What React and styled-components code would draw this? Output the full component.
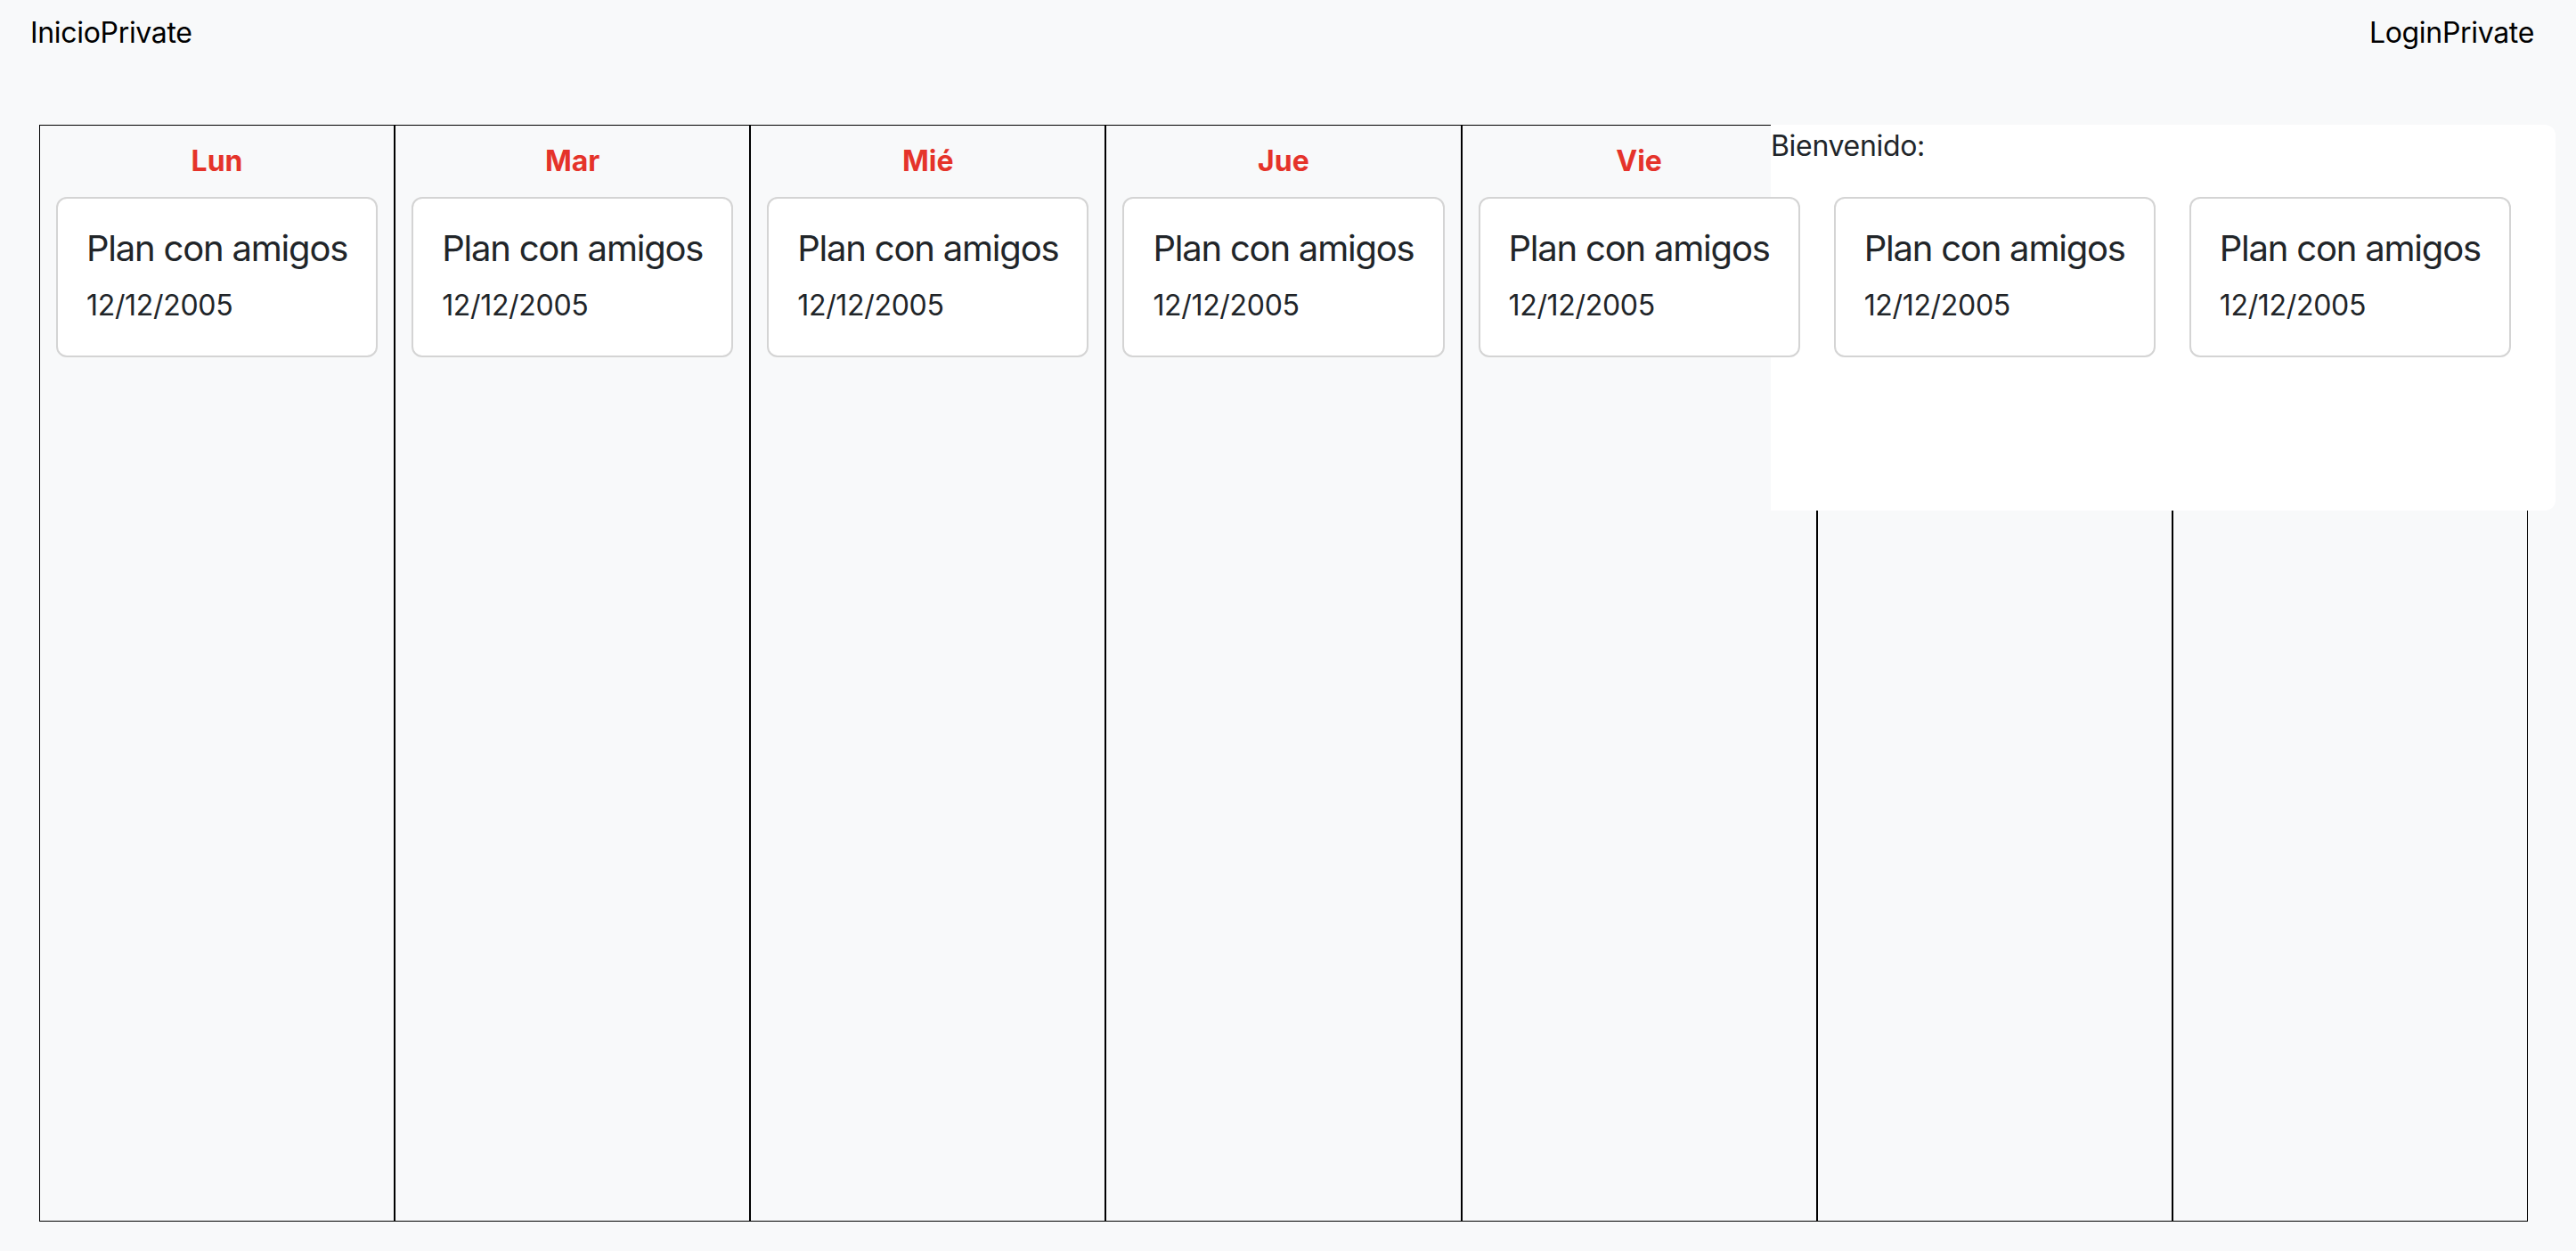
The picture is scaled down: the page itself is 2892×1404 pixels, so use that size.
import styled, { createGlobalStyle } from "styled-components";

const GlobalStyle = createGlobalStyle`
  body {
    margin: 0;
    background: #f8f9fa;
    font-family: Inter, "Liberation Sans", sans-serif;
    letter-spacing: -0.02em;
    color: #212529;
  }
`;

const days = ["Lun", "Mar", "Mié", "Jue", "Vie", "Sáb", "Dom"];

export default function App() {
  return (
    <>
      <GlobalStyle />
      <Nav>
        <NavLink>InicioPrivate</NavLink>
        <NavLink>LoginPrivate</NavLink>
      </Nav>
      <Board>
        <Week>
          {days.map((day) => (
            <Column key={day}>
              <DayName>{day}</DayName>
              <Card>
                <Title>Plan con amigos</Title>
                <Date>12/12/2005</Date>
              </Card>
            </Column>
          ))}
        </Week>
        <Welcome>Bienvenido:</Welcome>
      </Board>
    </>
  );
}

const Nav = styled.nav`
  display: flex;
  justify-content: space-between;
  padding: 13px 47px 0 34px;
`;

const NavLink = styled.span`
  font-size: 32px;
  line-height: 48px;
  color: #000;
`;

const Board = styled.main`
  position: relative;
  margin: 79px 0 0 44px;
  width: 2793px;
`;

const Week = styled.div`
  display: grid;
  grid-template-columns: repeat(7, 1fr);
  height: 1231px;
`;

const Column = styled.section`
  display: flex;
  flex-direction: column;
  border: 1px solid #000;
  padding: 0 18px;
`;

const DayName = styled.h4`
  margin: 16px 0 16px;
  text-align: center;
  font-size: 32px;
  line-height: 48px;
  font-weight: 700;
  letter-spacing: 0;
  color: #e5332a;
`;

const Card = styled.div`
  position: relative;
  z-index: 2;
  background: #fff;
  border: 2px solid #d4d4d4;
  border-radius: 12px;
  padding: 32px;
`;

const Title = styled.h5`
  margin: 0 0 16px;
  font-size: 40px;
  line-height: 48px;
  font-weight: 400;
  letter-spacing: -0.03em;
  white-space: nowrap;
`;

const Date = styled.p`
  margin: 0;
  font-size: 32px;
  line-height: 48px;
`;

const Welcome = styled.div`
  position: absolute;
  z-index: 1;
  top: 0;
  left: 1944px;
  width: 881px;
  height: 433px;
  background: #fff;
  border-radius: 0 12px 12px 0;
  font-size: 32px;
  line-height: 48px;
`;
